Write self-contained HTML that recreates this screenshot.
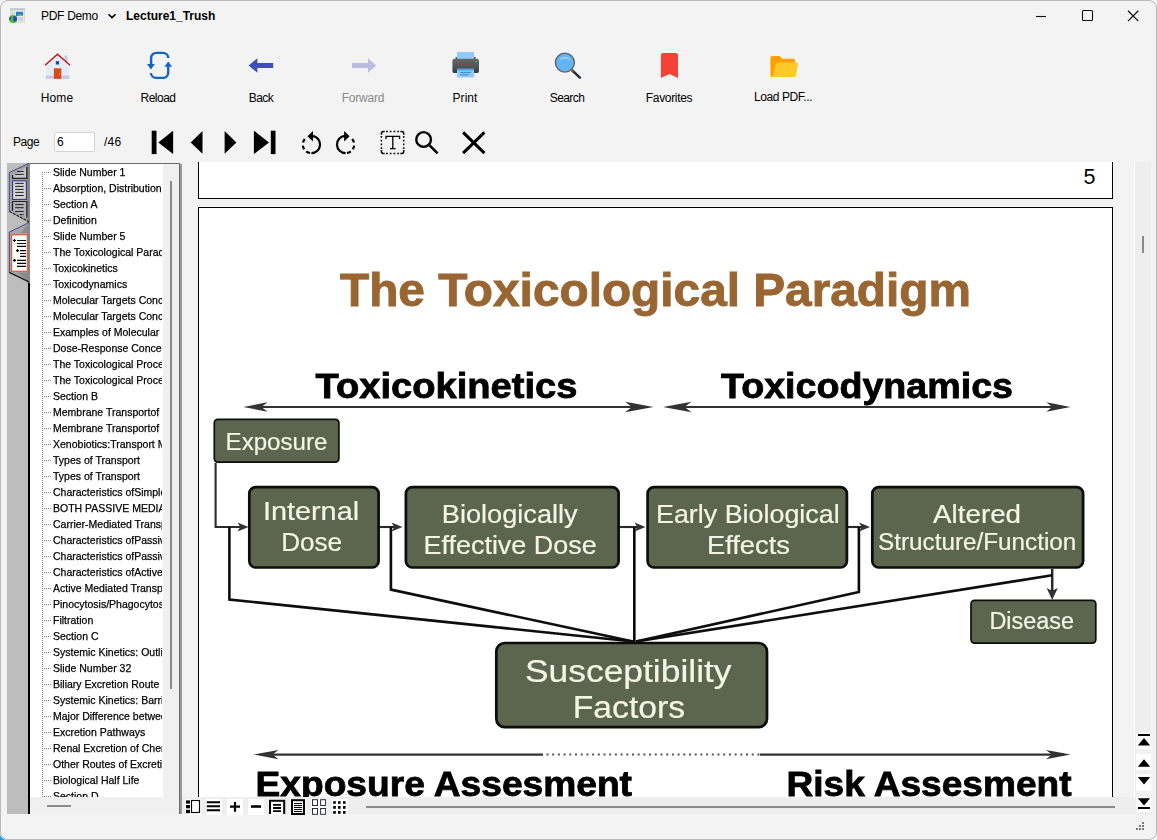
<!DOCTYPE html>
<html>
<head>
<meta charset="utf-8">
<title>PDF Demo</title>
<style>
html,body{margin:0;padding:0;}
body{width:1157px;height:840px;background:#f3f3f3;position:relative;overflow:hidden;font-family:"Liberation Sans",sans-serif;color:#000;}
.abs{position:absolute;}
.t{position:absolute;white-space:nowrap;line-height:1;}
.tb{position:absolute;top:98px;font-size:12px;line-height:12px;white-space:nowrap;transform:translate(-50%,-50%);letter-spacing:-0.35px;}
.tree{position:absolute;font-size:11px;line-height:16px;height:16px;white-space:nowrap;overflow:hidden;width:109px;color:#000;}
.tree span{display:inline-block;transform:scaleX(0.955);transform-origin:0 50%;-webkit-text-stroke:0.25px #000;}
#frame{position:absolute;left:0;top:0;width:1155px;height:838px;border:1px solid #b9b9b9;border-radius:8px;pointer-events:none;z-index:50;}
</style>
</head>
<body>
<!-- ===== window frame ===== -->
<div id="frame"></div>
<svg class="abs" style="left:0;top:830px;z-index:49;" width="10" height="10" viewBox="0 830 10 10"><path d="M0 832.5 V840 H6.5 A7 7 0 0 1 0 832.5 Z" fill="#1e9be0"/></svg>

<!-- ===== title bar ===== -->
<div id="titlebar">
<svg class="abs" style="left:0;top:0;" width="1157" height="32" viewBox="0 0 1157 32">
<!-- app icon -->
<rect x="10" y="8" width="15" height="14.5" fill="#e4e6e8"/>
<rect x="10" y="8" width="15" height="2.2" fill="#c4c6c8"/>
<rect x="10.3" y="8.3" width="14.4" height="14" fill="none" stroke="#cfd1d3" stroke-width="0.6"/>
<rect x="16" y="11.8" width="7" height="4.2" fill="#1f7fd6"/>
<path d="M17.5 16 L19.5 13.4 L21 15 L21.8 14.3 L23 16 Z" fill="#6fbf5a"/>
<rect x="18.3" y="17.3" width="4.7" height="3.6" fill="#cfd2d5"/>
<rect x="11.6" y="11.6" width="3" height="2.6" fill="#d4d7da"/>
<circle cx="13.1" cy="19.1" r="4.1" fill="#4fc42a"/>
<path d="M9.3 18 L10.4 16.6 L11.4 17.2 L10.6 19.6 L9.6 20.4 Z" fill="#3040c8"/>
<path d="M13 16.2 L16.4 16.4 L17.1 19 L16.2 21.6 L13.6 20.9 L12.6 19.8 L14.2 18.3 L12.8 17.6 Z" fill="#3040c8"/>
<!-- chevron -->
<path d="M108.5 14.2 L112 17.6 L115.5 14.2" fill="none" stroke="#000" stroke-width="1.6"/>
<!-- window controls -->
<path d="M1036 16.5 H1046" stroke="#111" stroke-width="1.1"/>
<rect x="1082.5" y="10.5" width="10" height="10" rx="1" fill="none" stroke="#111" stroke-width="1.1"/>
<path d="M1128 10.8 L1138.3 21.1 M1138.3 10.8 L1128 21.1" stroke="#111" stroke-width="1.25"/>
</svg>
<span class="t" style="left:41px;top:10px;font-size:12px;letter-spacing:-0.3px;">PDF Demo</span>
<span class="t" style="left:126px;top:10px;font-size:12px;font-weight:bold;">Lecture1_Trush</span>
</div>

<!-- ===== main toolbar ===== -->
<div id="toolbar">
<svg class="abs" style="left:0;top:40px;" width="1157" height="50" viewBox="0 40 1157 50">
<!-- home -->
<rect x="64.4" y="55.5" width="3.1" height="6" fill="#c5cae9"/>
<path d="M45.8 65.5 L57.5 54.4 L69.4 65.5 V78.8 H45.8 Z" fill="#e8eaf6"/>
<rect x="45.8" y="75.6" width="23.6" height="3.2" fill="#c5cae9"/>
<rect x="53.9" y="68.3" width="7.4" height="10.5" fill="#de4715"/>
<rect x="59" y="73.2" width="1" height="1.6" fill="#f0a080"/>
<rect x="55.8" y="61.2" width="3.3" height="3.3" fill="#0d47a1"/>
<path d="M45.1 65.3 L57.5 54.2 L70.1 65.3" fill="none" stroke="#c21616" stroke-width="1.5" stroke-linejoin="miter"/>
<!-- reload -->
<g fill="none" stroke="#1565c0" stroke-width="2.4">
<path d="M168.2 58 A5.2 5.2 0 0 0 163 52.9 H156.3 A5.2 5.2 0 0 0 151.1 58.1 V65"/>
<path d="M150.9 73 A5.2 5.2 0 0 0 156.1 77.9 H163 A5.2 5.2 0 0 0 168.2 72.7 V66"/>
</g>
<path d="M147 64 H154.9 L150.95 69.4 Z" fill="#1565c0"/>
<path d="M164.3 66.8 H172.1 L168.3 61.6 Z" fill="#1565c0"/>
<!-- back -->
<path d="M248.6 65.5 L257.4 58.2 V63.1 H273.2 V67.9 H257.4 V72.8 Z" fill="#3f51b5"/>
<!-- forward (disabled) -->
<path d="M376.2 65.5 L368 58.2 V63.1 H352 V67.9 H368 V72.8 Z" fill="#babde0"/>
<!-- print -->
<rect x="455.6" y="57" width="1.6" height="2" fill="#455a64"/><rect x="474" y="57" width="1.6" height="2" fill="#455a64"/>
<rect x="457" y="52.1" width="17" height="7.4" fill="#90caf9"/>
<linearGradient id="pg" x1="0" y1="0" x2="0" y2="1"><stop offset="0" stop-color="#666"/><stop offset="0.5" stop-color="#555"/><stop offset="1" stop-color="#3c3c3c"/></linearGradient>
<rect x="452.4" y="58.8" width="26.6" height="14.3" rx="2.2" fill="url(#pg)"/>
<circle cx="476.2" cy="61.6" r="0.9" fill="#00e676"/>
<rect x="457" y="68.8" width="17" height="8.6" fill="#90caf9"/>
<rect x="457" y="68.8" width="17" height="1.6" fill="#42a5f5"/>
<rect x="460.2" y="71.9" width="10.8" height="1" fill="#3f7fd8"/>
<rect x="460.2" y="74.3" width="8.6" height="1" fill="#3f7fd8"/>
<!-- search -->
<path d="M572.3 70.5 L579.9 77.6" stroke="#263238" stroke-width="2.5" stroke-linecap="round"/>
<path d="M571.6 69.6 L573.6 71.6" stroke="#616161" stroke-width="2.5"/>
<circle cx="564.9" cy="62.6" r="9.5" fill="#64b5f6" stroke="#616161" stroke-width="1.4"/>
<path d="M560.4 59.6 Q564.9 55.6 569.5 59.6" fill="none" stroke="#cfe8fc" stroke-width="1"/>
<!-- favorites -->
<path d="M660.9 55 A2.1 2.1 0 0 1 663 52.9 H675.9 A2.1 2.1 0 0 1 678 55 V77.9 L669.5 74 L660.9 77.9 Z" fill="#f44336"/>
<!-- load pdf -->
<path d="M770.4 58 A2 2 0 0 1 772.4 56 H779.6 L782.4 58.8 H793.1 A2 2 0 0 1 795.1 60.8 V74.9 A2 2 0 0 1 793.1 76.9 H772.4 A2 2 0 0 1 770.4 74.9 Z" fill="#ffa000"/>
<path d="M777.9 62.6 H796.4 A1.7 1.7 0 0 1 798 64.8 L795.9 75.4 A2 2 0 0 1 794 76.9 H772.8 L775.7 64.3 A2.2 2.2 0 0 1 777.9 62.6 Z" fill="#ffca28"/>
</svg>
<svg class="abs" style="left:0;top:122px;" width="600" height="40" viewBox="0 122 600 40">
<!-- first/prev/next/last -->
<rect x="151.7" y="130.7" width="4.8" height="23.4" fill="#000"/>
<path d="M158.3 142.4 L173.1 130.7 V154.1 Z" fill="#000"/>
<path d="M190.7 142.4 L202.5 131.1 V153.7 Z" fill="#000"/>
<path d="M236.4 142.4 L224.6 131.1 V153.7 Z" fill="#000"/>
<path d="M269 142.4 L253.9 130.7 V154.1 Z" fill="#000"/>
<rect x="270.8" y="130.7" width="4.7" height="23.4" fill="#000"/>
<!-- rotate ccw -->
<g fill="none" stroke="#000" stroke-width="2.2">
<path d="M312.15 135.93 A8.6 8.6 0 0 1 311.4 153.1"/>
<path d="M311.4 153.1 A8.6 8.6 0 0 1 304.8 139" stroke-dasharray="0 1.4 4.05 2.85 4.05 2.85 4.05 100"/>
</g>
<path d="M307.5 136.2 L313 130.9 V141.5 Z" fill="#000"/>
<!-- rotate cw -->
<g fill="none" stroke="#000" stroke-width="2.2">
<path d="M344.85 135.93 A8.6 8.6 0 0 0 345.6 153.1"/>
<path d="M345.6 153.1 A8.6 8.6 0 0 0 352.2 139" stroke-dasharray="0 1.4 4.05 2.85 4.05 2.85 4.05 100"/>
</g>
<path d="M349.6 136.2 L344.1 130.9 V141.5 Z" fill="#000"/>
<!-- text select -->
<g fill="none" stroke="#000" stroke-width="1.5">
<path d="M381.4 134.7 V133.4 A2 2 0 0 1 383.4 131.4 H384.7 M400.4 131.4 H401.7 A2 2 0 0 1 403.7 133.4 V134.7 M403.7 150.1 V151.4 A2 2 0 0 1 401.7 153.4 H400.4 M384.7 153.4 H383.4 A2 2 0 0 1 381.4 151.4 V150.1"/>
<path d="M386.05 131.4 H399.2 M386.05 153.4 H399.2 M381.4 135.95 V149.2 M403.7 135.95 V149.2" stroke-dasharray="1.7 2.05"/>
</g>
<path d="M386 139 V136.3 H399.6 V139 M392.8 136.3 V148.6 M390 148.6 H395.6" fill="none" stroke="#000" stroke-width="1.3"/>
<!-- search -->
<circle cx="423.6" cy="139.5" r="7.35" fill="none" stroke="#000" stroke-width="2.4"/>
<path d="M429.6 145.4 L437.6 153.3" stroke="#000" stroke-width="2.6"/>
<!-- close -->
<path d="M463.1 132.4 L484.4 153.1 M484.4 132.4 L463.1 153.1" stroke="#000" stroke-width="3"/>
</svg>
<span class="tb" style="left:57px;letter-spacing:0.1px;">Home</span>
<span class="tb" style="left:158px;letter-spacing:-0.5px;">Reload</span>
<span class="tb" style="left:261px;letter-spacing:-0.6px;">Back</span>
<span class="tb" style="left:363px;color:#8a8a8a;letter-spacing:-0.2px;">Forward</span>
<span class="tb" style="left:465px;letter-spacing:0.05px;">Print</span>
<span class="tb" style="left:567px;letter-spacing:-0.6px;">Search</span>
<span class="tb" style="left:669px;letter-spacing:-0.32px;">Favorites</span>
<span class="tb" style="left:783px;top:97px;letter-spacing:-0.41px;">Load PDF...</span>
</div>

<!-- ===== page row ===== -->
<div id="pagerow">
<span class="t" style="left:13px;top:136px;font-size:12px;letter-spacing:-0.45px;">Page</span>
<div class="abs" style="left:54px;top:132px;width:39px;height:18px;background:#fff;border:1px solid #d4d4d4;border-radius:2px;"></div>
<span class="t" style="left:57px;top:136px;font-size:12px;">6</span>
<span class="t" style="left:104px;top:136px;font-size:12px;letter-spacing:0.2px;">/46</span>
</div>

<!-- ===== sidebar ===== -->
<div id="sidebar">
<div class="abs" style="left:7px;top:163px;width:21px;height:651px;background:#bdbdbd;"></div>
<div class="abs" style="left:28px;top:282px;width:2px;height:532px;background:#000;"></div>
<div class="abs" style="left:30px;top:163px;width:133px;height:634px;background:#fff;"></div>
<div class="abs" style="left:163px;top:163px;width:16px;height:651px;background:#f0f0f0;"></div>
<div class="abs" style="left:30px;top:797px;width:149px;height:17px;background:#f0f0f0;"></div>
<div class="abs" style="left:29px;top:163px;width:151px;height:1px;background:#696969;"></div>
<div class="abs" style="left:179px;top:163px;width:1px;height:651px;background:#696969;"></div>
<div class="abs" style="left:180px;top:164px;width:2px;height:650px;background:#9a9a9a;"></div>
<div class="abs" style="left:170px;top:181px;width:2px;height:508px;background:#8a8a8a;"></div>
<div class="abs" style="left:47px;top:805px;width:24px;height:2px;background:#8a8a8a;"></div>
<svg class="abs" style="left:7px;top:163px;" width="23" height="125" viewBox="7 163 23 125">
<rect x="27" y="163" width="3" height="120" fill="#868686"/>
<!-- tab 1 -->
<path d="M29 163.2 L9.3 172.4 V211.4 L29 221.9 Z" fill="#a4a4a4"/>
<path d="M27 164 V221 L29.5 222 V163 Z" fill="#868686"/>
<path d="M29 163.3 L9.3 172.5 V211.4" fill="none" stroke="#46468c" stroke-width="1"/>
<path d="M9.3 211.4 L29 221.9" fill="none" stroke="#1a1a1a" stroke-width="1.1" stroke-dasharray="3 1"/>
<path d="M12.6 175.5 L26.6 167.2 V178 H12.6 Z" fill="#c6c6c6"/>
<path d="M14.5 176.6 L25.5 168" stroke="#b4b4dc" stroke-width="1"/>
<path d="M12.6 175 V178.3 H26.8 V167" fill="none" stroke="#222" stroke-width="1.3"/>
<path d="M17.1 171.5 H23.7 M15.2 174.4 H23.7" stroke="#222" stroke-width="1"/>
<rect x="12.6" y="180.8" width="13.8" height="18.6" fill="#d3d3d3" stroke="#2e2e82" stroke-width="1"/>
<path d="M15.2 183.4 H23.7 M15.2 186.4 H23.7 M15.2 189.4 H23.7 M15.2 192.4 H23.7 M15.2 195.5 H23.7" stroke="#222" stroke-width="1"/>
<path d="M12.6 201.6 H26.6 V217.4 L12.6 210.4 Z" fill="#b2b2b8"/>
<path d="M12.5 211 V201.5 H26.8 V217.6" fill="none" stroke="#222" stroke-width="1.2"/>
<path d="M15.2 204.6 H23.7 M15.2 207.7 H23.7 M15.2 211.5 H23.7 M19.8 214.6 H23.7" stroke="#222" stroke-width="1"/>
<!-- tab 2 -->
<path d="M29 222.4 L9.3 232.2 V272.4 L29 281.8 Z" fill="#a6a6a6"/>
<path d="M29 222.4 L21 233 H29 Z M29 281.8 L17 272.6 H29 Z" fill="#8a8a8a"/>
<path d="M27.6 232 V273 H29.5 V232 Z" fill="#868686"/>
<path d="M29 222.5 L9.3 232.2 V272.4" fill="none" stroke="#46468c" stroke-width="1"/>
<path d="M9.3 272.4 L29 281.8" fill="none" stroke="#1a1a1a" stroke-width="1.3"/>
<rect x="11.6" y="234.7" width="15.8" height="36.6" fill="#fff" stroke="#e0603c" stroke-width="1.3"/>
<g stroke="#000" stroke-width="1.2">
<path d="M17 240.5 H26 M17 243.5 H26 M17 246.4 H26 M20.1 250.6 H26 M20.1 253.5 H26 M20.1 256.4 H26 M17 260.4 H26 M17 263.4 H26 M17 266.4 H26"/>
<path d="M13 240.5 H16 M14.5 239 V242 M16 250.6 H19 M17.5 249.1 V252.1 M13 260.4 H16 M14.5 258.9 V261.9"/>
</g>
</svg>
<div class="abs" id="treeclip" style="left:30px;top:164px;width:133px;height:633px;overflow:hidden;">
<svg class="abs" style="left:0;top:0;" width="133" height="640" viewBox="30 164 133 640"><g stroke="#808080" stroke-width="1" stroke-dasharray="1 1" fill="none">
<path d="M42.5 172 V804"/>
<path d="M44 172.5 H52"/>
<path d="M44 188.5 H52"/>
<path d="M44 204.5 H52"/>
<path d="M44 220.5 H52"/>
<path d="M44 236.5 H52"/>
<path d="M44 252.5 H52"/>
<path d="M44 268.5 H52"/>
<path d="M44 284.5 H52"/>
<path d="M44 300.5 H52"/>
<path d="M44 316.5 H52"/>
<path d="M44 332.5 H52"/>
<path d="M44 348.5 H52"/>
<path d="M44 364.5 H52"/>
<path d="M44 380.5 H52"/>
<path d="M44 396.5 H52"/>
<path d="M44 412.5 H52"/>
<path d="M44 428.5 H52"/>
<path d="M44 444.5 H52"/>
<path d="M44 460.5 H52"/>
<path d="M44 476.5 H52"/>
<path d="M44 492.5 H52"/>
<path d="M44 508.5 H52"/>
<path d="M44 524.5 H52"/>
<path d="M44 540.5 H52"/>
<path d="M44 556.5 H52"/>
<path d="M44 572.5 H52"/>
<path d="M44 588.5 H52"/>
<path d="M44 604.5 H52"/>
<path d="M44 620.5 H52"/>
<path d="M44 636.5 H52"/>
<path d="M44 652.5 H52"/>
<path d="M44 668.5 H52"/>
<path d="M44 684.5 H52"/>
<path d="M44 700.5 H52"/>
<path d="M44 716.5 H52"/>
<path d="M44 732.5 H52"/>
<path d="M44 748.5 H52"/>
<path d="M44 764.5 H52"/>
<path d="M44 780.5 H52"/>
<path d="M44 796.5 H52"/>
</g></svg>
<div class="tree" style="left:23.4px;top:0px;"><span>Slide Number 1</span></div>
<div class="tree" style="left:23.4px;top:16px;"><span>Absorption, Distribution, and Excretion</span></div>
<div class="tree" style="left:23.4px;top:32px;"><span>Section A</span></div>
<div class="tree" style="left:23.4px;top:48px;"><span>Definition</span></div>
<div class="tree" style="left:23.4px;top:64px;"><span>Slide Number 5</span></div>
<div class="tree" style="left:23.4px;top:80px;"><span>The Toxicological Paradigm</span></div>
<div class="tree" style="left:23.4px;top:96px;"><span>Toxicokinetics</span></div>
<div class="tree" style="left:23.4px;top:112px;"><span>Toxicodynamics</span></div>
<div class="tree" style="left:23.4px;top:128px;"><span>Molecular Targets Concept</span></div>
<div class="tree" style="left:23.4px;top:144px;"><span>Molecular Targets Concept</span></div>
<div class="tree" style="left:23.4px;top:160px;"><span>Examples of Molecular Targets</span></div>
<div class="tree" style="left:23.4px;top:176px;"><span>Dose-Response Concepts</span></div>
<div class="tree" style="left:23.4px;top:192px;"><span>The Toxicological Process</span></div>
<div class="tree" style="left:23.4px;top:208px;"><span>The Toxicological Process</span></div>
<div class="tree" style="left:23.4px;top:224px;"><span>Section B</span></div>
<div class="tree" style="left:23.4px;top:240px;"><span>Membrane Transportof Xenobiotics</span></div>
<div class="tree" style="left:23.4px;top:256px;"><span>Membrane Transportof Xenobiotics</span></div>
<div class="tree" style="left:23.4px;top:272px;"><span>Xenobiotics:Transport Mechanisms</span></div>
<div class="tree" style="left:23.4px;top:288px;"><span>Types of Transport</span></div>
<div class="tree" style="left:23.4px;top:304px;"><span>Types of Transport</span></div>
<div class="tree" style="left:23.4px;top:320px;"><span>Characteristics ofSimple Diffusion</span></div>
<div class="tree" style="left:23.4px;top:336px;"><span>BOTH PASSIVE MEDIATED</span></div>
<div class="tree" style="left:23.4px;top:352px;"><span>Carrier-Mediated Transport</span></div>
<div class="tree" style="left:23.4px;top:368px;"><span>Characteristics ofPassive</span></div>
<div class="tree" style="left:23.4px;top:384px;"><span>Characteristics ofPassive</span></div>
<div class="tree" style="left:23.4px;top:400px;"><span>Characteristics ofActive</span></div>
<div class="tree" style="left:23.4px;top:416px;"><span>Active Mediated Transport</span></div>
<div class="tree" style="left:23.4px;top:432px;"><span>Pinocytosis/Phagocytosis</span></div>
<div class="tree" style="left:23.4px;top:448px;"><span>Filtration</span></div>
<div class="tree" style="left:23.4px;top:464px;"><span>Section C</span></div>
<div class="tree" style="left:23.4px;top:480px;"><span>Systemic Kinetics: Outline</span></div>
<div class="tree" style="left:23.4px;top:496px;"><span>Slide Number 32</span></div>
<div class="tree" style="left:23.4px;top:512px;"><span>Biliary Excretion Route</span></div>
<div class="tree" style="left:23.4px;top:528px;"><span>Systemic Kinetics: Barriers</span></div>
<div class="tree" style="left:23.4px;top:544px;"><span>Major Difference between</span></div>
<div class="tree" style="left:23.4px;top:560px;"><span>Excretion Pathways</span></div>
<div class="tree" style="left:23.4px;top:576px;"><span>Renal Excretion of Chemicals</span></div>
<div class="tree" style="left:23.4px;top:592px;"><span>Other Routes of Excretion</span></div>
<div class="tree" style="left:23.4px;top:608px;"><span>Biological Half Life</span></div>
<div class="tree" style="left:23.4px;top:624px;"><span>Section D</span></div>
</div>
</div>

<!-- ===== document area ===== -->
<div id="doc">
<div class="abs" style="left:198px;top:162px;width:913px;height:36px;background:#fff;border:1px solid #000;border-top:none;"></div>
<div class="abs" style="left:198px;top:207px;width:913px;height:590px;background:#fff;border:1px solid #000;border-bottom:none;"></div>
<span class="t" style="left:1083.5px;top:167px;font-size:21.5px;">5</span>
<svg class="abs" style="left:199px;top:208px;" width="914" height="589" viewBox="199 208 914 589" font-family="Liberation Sans, sans-serif">
<defs>
<filter id="soft" x="-5%" y="-5%" width="110%" height="110%"><feGaussianBlur stdDeviation="0.45"/></filter>
</defs>
<g filter="url(#soft)">
<!-- title -->
<text x="340" y="306" font-size="46" font-weight="bold" fill="#996633" stroke="#996633" stroke-width="0.9" textLength="631" lengthAdjust="spacingAndGlyphs">The Toxicological Paradigm</text>
<text x="315.5" y="397.5" font-size="35" font-weight="bold" fill="#000" stroke="#000" stroke-width="0.8" textLength="262" lengthAdjust="spacingAndGlyphs">Toxicokinetics</text>
<text x="721" y="397.5" font-size="35" font-weight="bold" fill="#000" stroke="#000" stroke-width="0.8" textLength="292" lengthAdjust="spacingAndGlyphs">Toxicodynamics</text>
<!-- top arrows -->
<g stroke="#333" stroke-width="2.2" fill="none">
<path d="M250 407 H648"/>
<path d="M668 407 H1064"/>
</g>
<g fill="#333">
<path d="M243.3 407 L267.5 402.3 L261.5 407 L267.5 411.7 Z"/>
<path d="M653.5 407 L625 401.8 L632 407 L625 412.2 Z"/>
<path d="M663 407 L691.5 401.8 L684.5 407 L691.5 412.2 Z"/>
<path d="M1070.5 407 L1046.3 402.3 L1052.3 407 L1046.3 411.7 Z"/>
</g>
<!-- connector lines -->
<g stroke="#2a2a2a" stroke-width="2.1" fill="none">
<path d="M215.6 463 V527 H242"/>
<path d="M380 527 H395"/>
<path d="M620 527 H638"/>
<path d="M848 527 H862"/>
<path d="M1052.2 569 V592" stroke-width="2.5"/>
</g>
<g fill="#333">
<path d="M248.5 527 L237.5 522.4 L240.3 527 L237.5 531.6 Z"/>
<path d="M402.5 527 L391.5 522.4 L394.3 527 L391.5 531.6 Z"/>
<path d="M645.5 527 L634.5 522.4 L637.3 527 L634.5 531.6 Z"/>
<path d="M870 527 L859 522.4 L861.8 527 L859 531.6 Z"/>
<path d="M1052.2 600 L1046.6 588 L1052.2 590.8 L1057.8 588 Z"/>
</g>
<g stroke="#0a0a0a" stroke-width="2.6" fill="none" stroke-linejoin="miter">
<path d="M229.4 527 V599.5 L633 641.5"/>
<path d="M390.9 527 V589.6 L633 641.5"/>
<path d="M634.3 527 V642"/>
<path d="M858.9 527 V592 L636 641.5"/>
<path d="M1052.2 575.3 L636 641.5"/>
</g>
<!-- boxes -->
<g fill="#5b6650" stroke="#0c0f08">
<rect x="214.3" y="419.3" width="124.6" height="42.8" rx="3.5" stroke-width="1.7"/>
<rect x="249.3" y="487.1" width="129.3" height="80.4" rx="6.5" stroke-width="2.7"/>
<rect x="405.9" y="487.1" width="212.7" height="80.4" rx="6.5" stroke-width="2.7"/>
<rect x="647.6" y="487.1" width="199.3" height="80.4" rx="6.5" stroke-width="2.7"/>
<rect x="872.3" y="487.1" width="210.8" height="80.4" rx="6.5" stroke-width="2.7"/>
<rect x="971" y="600.3" width="124.8" height="42.8" rx="3.5" stroke-width="1.7"/>
<rect x="496.3" y="643" width="270.7" height="84.2" rx="8.5" stroke-width="2.7"/>
</g>
<g fill="#f4f5e6" stroke="#f4f5e6" stroke-width="0.2" font-size="25.5">
<text x="225.6" y="449.8" font-size="24" textLength="101.8" lengthAdjust="spacingAndGlyphs">Exposure</text>
<text x="262.9" y="519.6" textLength="96.2" lengthAdjust="spacingAndGlyphs">Internal</text>
<text x="281.2" y="550.6" textLength="60.9" lengthAdjust="spacingAndGlyphs">Dose</text>
<text x="441.8" y="523" textLength="135.9" lengthAdjust="spacingAndGlyphs">Biologically</text>
<text x="423.5" y="553.7" textLength="173.2" lengthAdjust="spacingAndGlyphs">Effective Dose</text>
<text x="656.0" y="522.5" textLength="183.7" lengthAdjust="spacingAndGlyphs">Early Biological</text>
<text x="707.0" y="553.7" textLength="82.9" lengthAdjust="spacingAndGlyphs">Effects</text>
<text x="933.1" y="523.3" textLength="87.9" lengthAdjust="spacingAndGlyphs">Altered</text>
<text x="878.1" y="550" font-size="23" textLength="198.2" lengthAdjust="spacingAndGlyphs">Structure/Function</text>
<text x="989.4" y="629.4" font-size="23" textLength="84.6" lengthAdjust="spacingAndGlyphs">Disease</text>
<text x="524.9" y="681.5" font-size="31" textLength="206.7" lengthAdjust="spacingAndGlyphs">Susceptibility</text>
<text x="572.8" y="718.4" font-size="31" textLength="112.2" lengthAdjust="spacingAndGlyphs">Factors</text>
</g>
<!-- bottom arrows -->
<g stroke="#333" stroke-width="2.2" fill="none">
<path d="M260 754.6 H543"/>
<path d="M546.5 754.6 H760" stroke="#555" stroke-dasharray="2 3.7" stroke-width="2"/>
<path d="M760 754.6 H1064"/>
</g>
<g fill="#333">
<path d="M253.6 754.6 L278.5 749.9 L272.5 754.6 L278.5 759.3 Z"/>
<path d="M1070.5 754.6 L1046 749.9 L1052 754.6 L1046 759.3 Z"/>
</g>
<text x="255.5" y="795.6" font-size="35" font-weight="bold" fill="#000" stroke="#000" stroke-width="0.8" textLength="376.5" lengthAdjust="spacingAndGlyphs">Exposure Assesment</text>
<text x="786.5" y="795.6" font-size="35" font-weight="bold" fill="#000" stroke="#000" stroke-width="0.8" textLength="285" lengthAdjust="spacingAndGlyphs">Risk Assesment</text>
</g>
</svg>
</div>

<!-- ===== bottom bar / scrollbar ===== -->
<div id="bottom">
<div class="abs" style="left:182px;top:797px;width:969px;height:17px;background:#eeeeee;"></div>
<div class="abs" style="left:1134px;top:162px;width:1px;height:635px;background:#fbfbfb;"></div>
<div class="abs" style="left:1135px;top:162px;width:16px;height:569px;background:#eeeeee;"></div>
<div class="abs" style="left:1135px;top:731px;width:16px;height:66px;background:#f1f1f1;"></div>
<div class="abs" style="left:1142px;top:236px;width:2px;height:17px;background:#8a8a8a;"></div>
<div class="abs" style="left:366px;top:806px;width:749px;height:2px;background:#8a8a8a;"></div>
<svg class="abs" style="left:182px;top:797px;" width="175" height="20" viewBox="182 797 175 20">
<g fill="#fff">
<rect x="185" y="799" width="16" height="16"/><rect x="206" y="799" width="16" height="16"/><rect x="227" y="799" width="16" height="16"/><rect x="248" y="799" width="16" height="16"/><rect x="269" y="799" width="16" height="16"/><rect x="290" y="799" width="16" height="16"/><rect x="311" y="799" width="16" height="16"/><rect x="332" y="799" width="16" height="16"/>
</g>
<!-- b1 -->
<g fill="#000"><rect x="186" y="800.4" width="4" height="3.2"/><rect x="186" y="805" width="4" height="3.3"/><rect x="186" y="809.8" width="4" height="3.4"/></g>
<rect x="191.5" y="800.5" width="8" height="12" fill="#fff" stroke="#000" stroke-width="1.15"/>
<!-- b2 -->
<path d="M206.8 802.2 H220 M206.8 806.3 H220 M206.8 810.2 H220" stroke="#000" stroke-width="2"/>
<!-- b3 -->
<path d="M230 806.7 H240 M235 802 V811.8" stroke="#000" stroke-width="2.2"/>
<!-- b4 -->
<path d="M251 806.5 H261" stroke="#000" stroke-width="2.6"/>
<!-- b5 -->
<path d="M270 814 V800.8 H284.2 V814" fill="none" stroke="#000" stroke-width="2"/>
<path d="M273 804.9 H281 M273 808 H281 M273 811.1 H281" stroke="#000" stroke-width="1.8"/>
<!-- b6 -->
<rect x="292" y="800.2" width="12" height="13.8" fill="#fff" stroke="#000" stroke-width="2"/>
<g fill="#000" shape-rendering="crispEdges"><rect x="294" y="803" width="8" height="1"/><rect x="294" y="805" width="8" height="1"/><rect x="294" y="807" width="8" height="1"/><rect x="294" y="809" width="8" height="1"/><rect x="294" y="811" width="8" height="1"/></g>
<!-- b7 -->
<g fill="#fff" stroke="#2c2c4a" stroke-width="1"><rect x="312.5" y="799.7" width="5" height="5.8"/><rect x="320.6" y="799.7" width="5" height="5.8"/><rect x="312.5" y="808.5" width="5" height="5.8"/><rect x="320.6" y="808.5" width="5" height="5.8"/></g>
<!-- b8 -->
<g fill="#000"><rect x="333.2" y="801.2" width="2.6" height="2.6"/><rect x="338" y="801.2" width="2.6" height="2.6"/><rect x="343" y="801.2" width="2.6" height="2.6"/><rect x="333.2" y="806" width="2.6" height="2.8"/><rect x="338" y="806" width="2.6" height="2.8"/><rect x="343" y="806" width="2.6" height="2.8"/><rect x="333.2" y="811" width="2.6" height="2.8"/><rect x="338" y="811" width="2.6" height="2.8"/><rect x="343" y="811" width="2.6" height="2.8"/></g>
</svg>
<svg class="abs" style="left:1134px;top:730px;" width="23" height="106" viewBox="1134 730 23 106">
<g fill="#fff"><rect x="1136" y="733" width="15" height="16"/><rect x="1136" y="754" width="15" height="16"/><rect x="1136" y="774.5" width="15" height="16"/><rect x="1136" y="796" width="15" height="16"/></g>
<g fill="#000">
<rect x="1138" y="734" width="12" height="2"/><path d="M1144 738 L1150.2 745.4 H1137.8 Z"/>
<path d="M1144 759.2 L1150.2 766.8 H1137.8 Z"/>
<path d="M1144 784.4 L1150.2 777 H1137.8 Z"/>
<path d="M1144 805.4 L1150.2 798.2 H1137.8 Z"/><rect x="1138" y="807" width="12" height="2"/>
</g>
<g fill="#7a7a7a"><rect x="1142" y="822" width="2" height="2"/><rect x="1139" y="825" width="2" height="2"/><rect x="1142" y="825" width="2" height="2"/><rect x="1136" y="828" width="2" height="2"/><rect x="1139" y="828" width="2" height="2"/><rect x="1142" y="828" width="2" height="2"/></g>
</svg>
</div>

</body>
</html>
